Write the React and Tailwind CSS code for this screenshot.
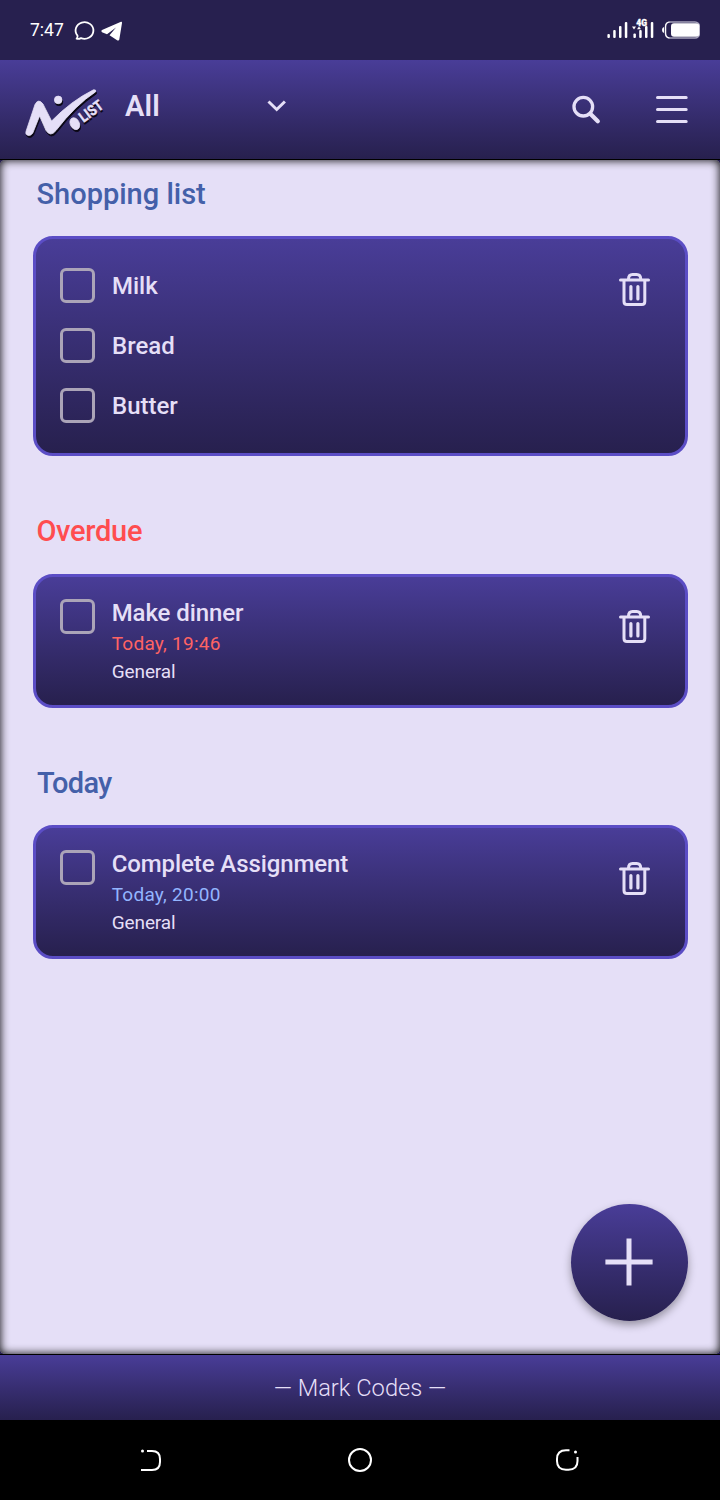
import React from "react";

function StatusBar() {
  return (
    <div className="flex h-[60px] items-center justify-between bg-[#27204f] pl-[30px] pr-5 text-white">
      <div className="flex items-center">
        <span className="w-[43px] text-[17.5px] leading-5">7:47</span>
        <svg className="mr-px h-6 w-[50px]" viewBox="0 0 50 24" fill="none">
          <path d="M4.5 17.6A8.9 8.3 0 1 1 8 20.1Q5.8 21.2 3.6 20.7Q5 19.4 4.5 17.6Z" stroke="white" strokeWidth="1.8" strokeLinejoin="round" />
          <path d="M48 3.8L29 12.1Q27.5 13.2 29 14.2L34 16.2L43 9.5L36.5 17.2L44.5 22.4Q46 23 46.3 21.4L49 5Q49.1 3.3 48 3.8Z" fill="white" />
        </svg>
      </div>
      <svg className="h-6 w-[94px]" viewBox="606 18 94 24" fill="white">
        <rect x="607.4" y="34" width="2.5" height="4" rx="1" />
        <rect x="613.2" y="30" width="2.5" height="8" rx="1" />
        <rect x="619" y="26" width="2.5" height="12" rx="1" />
        <rect x="624.8" y="22" width="2.5" height="16" rx="1" />
        <rect x="633.4" y="33.5" width="2.5" height="4.5" rx="1" />
        <rect x="639.2" y="30" width="2.5" height="8" rx="1" />
        <rect x="645" y="26" width="2.5" height="12" rx="1" />
        <rect x="650.8" y="22" width="2.5" height="16" rx="1" />
        <path d="M632 26.5h4l-2 3zM637 29.3l2-2.8l2 2.8z" />
        <text x="636.3" y="25.5" fontSize="9" fontWeight="900" fontFamily="Roboto, sans-serif" textLength="10.7" lengthAdjust="spacingAndGlyphs" stroke="white" strokeWidth="0.3">4G</text>
        <rect x="665.5" y="22" width="34" height="16" rx="4.5" fill="none" stroke="#a6a2ba" strokeWidth="1.5" />
        <path d="M669.5 22Q665.5 22.3 665.5 27V33Q665.5 37.7 669.5 38" fill="none" stroke="white" strokeWidth="1.2" />
        <rect x="671" y="23.3" width="28.3" height="13.5" rx="3" />
        <path d="M664 27Q662 27.5 662 30T664 33Z" />
      </svg>
    </div>
  );
}

function Logo() {
  return (
    <svg className="h-[65px] w-[90px] overflow-visible" viewBox="20 80 90 65">
      {["#0a0714", "#e5dff7"].map((color, i) => (
        <g key={color} fill={color} stroke={color} strokeWidth="0.8" transform={i === 0 ? "translate(0.8 2)" : undefined}>
          <path d="M26 131.5L35 104.5Q38.5 98 43 104L51.6 121Q71 101 93.5 89.8Q96.5 89.4 95.5 91.9Q75.5 105 56 130.5Q50.5 137.5 46 130.5L39.6 116L32.8 133Q29.8 137.2 26.4 134.5Q25.5 133.5 26 131.5Z" />
          <circle cx="58.2" cy="99.9" r="3.8" />
          <ellipse cx="74.8" cy="123.7" rx="4.5" ry="6.2" transform="rotate(-27 74.8 123.7)" />
          <text x="83.5" y="123" transform="rotate(-36 83.5 123)" fontSize="15" fontWeight="900" fontFamily="Roboto, sans-serif" textLength="26" lengthAdjust="spacingAndGlyphs" strokeWidth="0.3">LIST</text>
        </g>
      ))}
    </svg>
  );
}

function Header() {
  return (
    <header className="flex h-[100px] items-center border-b border-black bg-linear-to-b from-[#493d98] to-[#27204e] pl-5 pr-8 text-[#e5dff7]">
      <div className="mt-[6px] h-[65px]"><Logo /></div>
      <button className="mb-[7px] ml-[15px] flex w-[162px] items-center justify-between text-[29px] leading-9 font-semibold tracking-[0.2px]">
        All
        <svg className="h-5 w-5" viewBox="0.5 0.5 20 20" fill="none" stroke="currentColor" strokeWidth="3"><path d="M2 6L10.2 14L18.4 6" /></svg>
      </button>
      <div className="ml-auto flex items-center">
        <svg className="mr-[54px] h-8 w-8" viewBox="570 93.5 32 32" fill="none" stroke="currentColor">
          <circle cx="583.3" cy="106.2" r="9.3" strokeWidth="3.3" />
          <path d="M590.5 113.5L597.8 120.8" strokeWidth="4.2" strokeLinecap="round" />
        </svg>
        <svg className="h-8 w-8" viewBox="656 94 32 32" stroke="currentColor" strokeWidth="3" strokeLinecap="round">
          <path d="M657.5 97.5H686.2M657.5 109.5H686.2M657.5 121.5H686.2" />
        </svg>
      </div>
    </header>
  );
}

function Box() {
  return <span className="block h-[35px] w-[35px] shrink-0 rounded-[6px] border-3 border-[#aba4b8]" />;
}

function Trash() {
  return (
    <svg className="h-[34px] w-8 shrink-0" viewBox="0 0 32 34" fill="none" stroke="#e5dff7" strokeWidth="3" strokeLinecap="round">
      <path d="M1.5 7H29.5" />
      <path d="M9.5 6Q9.5 1.5 13.5 1.5H17.7Q21.7 1.5 21.7 6" />
      <path d="M5 8V28.5Q5 31.5 8 31.5H22.8Q25.8 31.5 25.8 28.5V8" />
      <path d="M11.9 13.5V26M18.9 13.5V26" strokeWidth="3.2" />
    </svg>
  );
}

const card = "flex rounded-[20px] border-3 border-[#5b4dc5] bg-linear-to-b from-[#493d98] to-[#27204e] pl-6 pr-[34px] text-[#e5dff7]";

function Task({ title, due, dueColor, trashMargin }) {
  return (
    <div className={card + " h-[134px]"}>
      <div className="mt-[22px]"><Box /></div>
      <div className="ml-[16.7px] mt-[20px] flex flex-col">
        <span className="h-[35px] text-[24px] leading-8 font-medium tracking-[-0.09px]">{title}</span>
        <span className={"h-7 text-[19px] leading-6 tracking-[0.25px] " + dueColor}>{due}</span>
        <span className="text-[19px] leading-6 tracking-[-0.1px]">General</span>
      </div>
      <div className={"ml-auto " + trashMargin}><Trash /></div>
    </div>
  );
}

export default function App() {
  return (
    <div className="flex h-[1500px] w-[720px] flex-col overflow-hidden bg-[#27204e] font-['Roboto',sans-serif]">
      <StatusBar />
      <Header />
      <main className="relative h-[1194px] rounded-[5px] bg-[#e5dff7] px-[33px] shadow-[inset_0_0_10px_0px_#000000]">
        <h2 className="h-[76px] pl-[3.5px] pt-4 text-[29px] leading-9 font-medium text-[#4460a9]">Shopping list</h2>
        <div className={card + " h-[220px] w-[655px]"}>
          <div className="mt-[29px] flex flex-col gap-[25px]">
            {["Milk", "Bread", "Butter"].map((item) => (
              <label key={item} className="flex h-[35px] items-center gap-[17px] text-[24px] font-medium"><Box />{item}</label>
            ))}
          </div>
          <div className="ml-auto mt-[34px]"><Trash /></div>
        </div>
        <h2 className="h-[118px] pl-[3.4px] pt-[57px] text-[29px] leading-9 font-medium tracking-[-0.27px] text-[#ff4d4f]">Overdue</h2>
        <div className="w-[655px]"><Task title="Make dinner" due="Today, 19:46" dueColor="text-[#ff6363]" trashMargin="mt-[33px]" /></div>
        <h2 className="h-[117px] pl-1 pt-[57px] text-[29px] leading-9 font-medium tracking-[-0.7px] text-[#4460a9]">Today</h2>
        <div className="w-[655px]"><Task title="Complete Assignment" due="Today, 20:00" dueColor="text-[#93b5ff]" trashMargin="mt-[34px]" /></div>
        <button className="absolute bottom-[33px] right-8 flex h-[117px] w-[117px] items-center justify-center rounded-full bg-linear-to-b from-[#493d98] to-[#27204e] shadow-[0_4px_8px_rgba(0,0,0,0.35)]">
          <svg className="mr-px mb-px h-12 w-12" viewBox="0 0 48 48" stroke="#e5dff7" strokeWidth="5"><path d="M24 0.4V47.6M0.4 24H47.6" /></svg>
        </button>
      </main>
      <footer className="flex h-[66px] items-center justify-center border-t border-black bg-linear-to-b from-[#493d98] to-[#27204e] pt-px text-[23.7px] leading-9 font-light text-[#e5dff7]">— Mark Codes —</footer>
      <nav className="flex h-20 items-center justify-between bg-black pl-[138px] pr-[140px]">
        <svg className="h-6 w-6" viewBox="0 0 24 24" fill="none" stroke="white" strokeWidth="2">
          <path d="M9 3H14Q22 3 22 11V14Q22 22 14 22H3" /><circle cx="4.5" cy="3" r="1.5" fill="white" stroke="none" />
        </svg>
        <svg className="ml-[2px] h-6 w-6" viewBox="0 0 24 24" fill="none" stroke="white" strokeWidth="2"><circle cx="12" cy="12" r="11" /></svg>
        <svg className="h-6 w-6" viewBox="0 0 24 24" fill="none" stroke="white" strokeWidth="2">
          <path d="M13.5 2.2H10Q1 2.2 1 11V13Q1 21.7 10 21.7H12.5Q21.5 21.7 21.5 13V9" /><circle cx="19.5" cy="4" r="1.5" fill="white" stroke="none" />
        </svg>
      </nav>
    </div>
  );
}
